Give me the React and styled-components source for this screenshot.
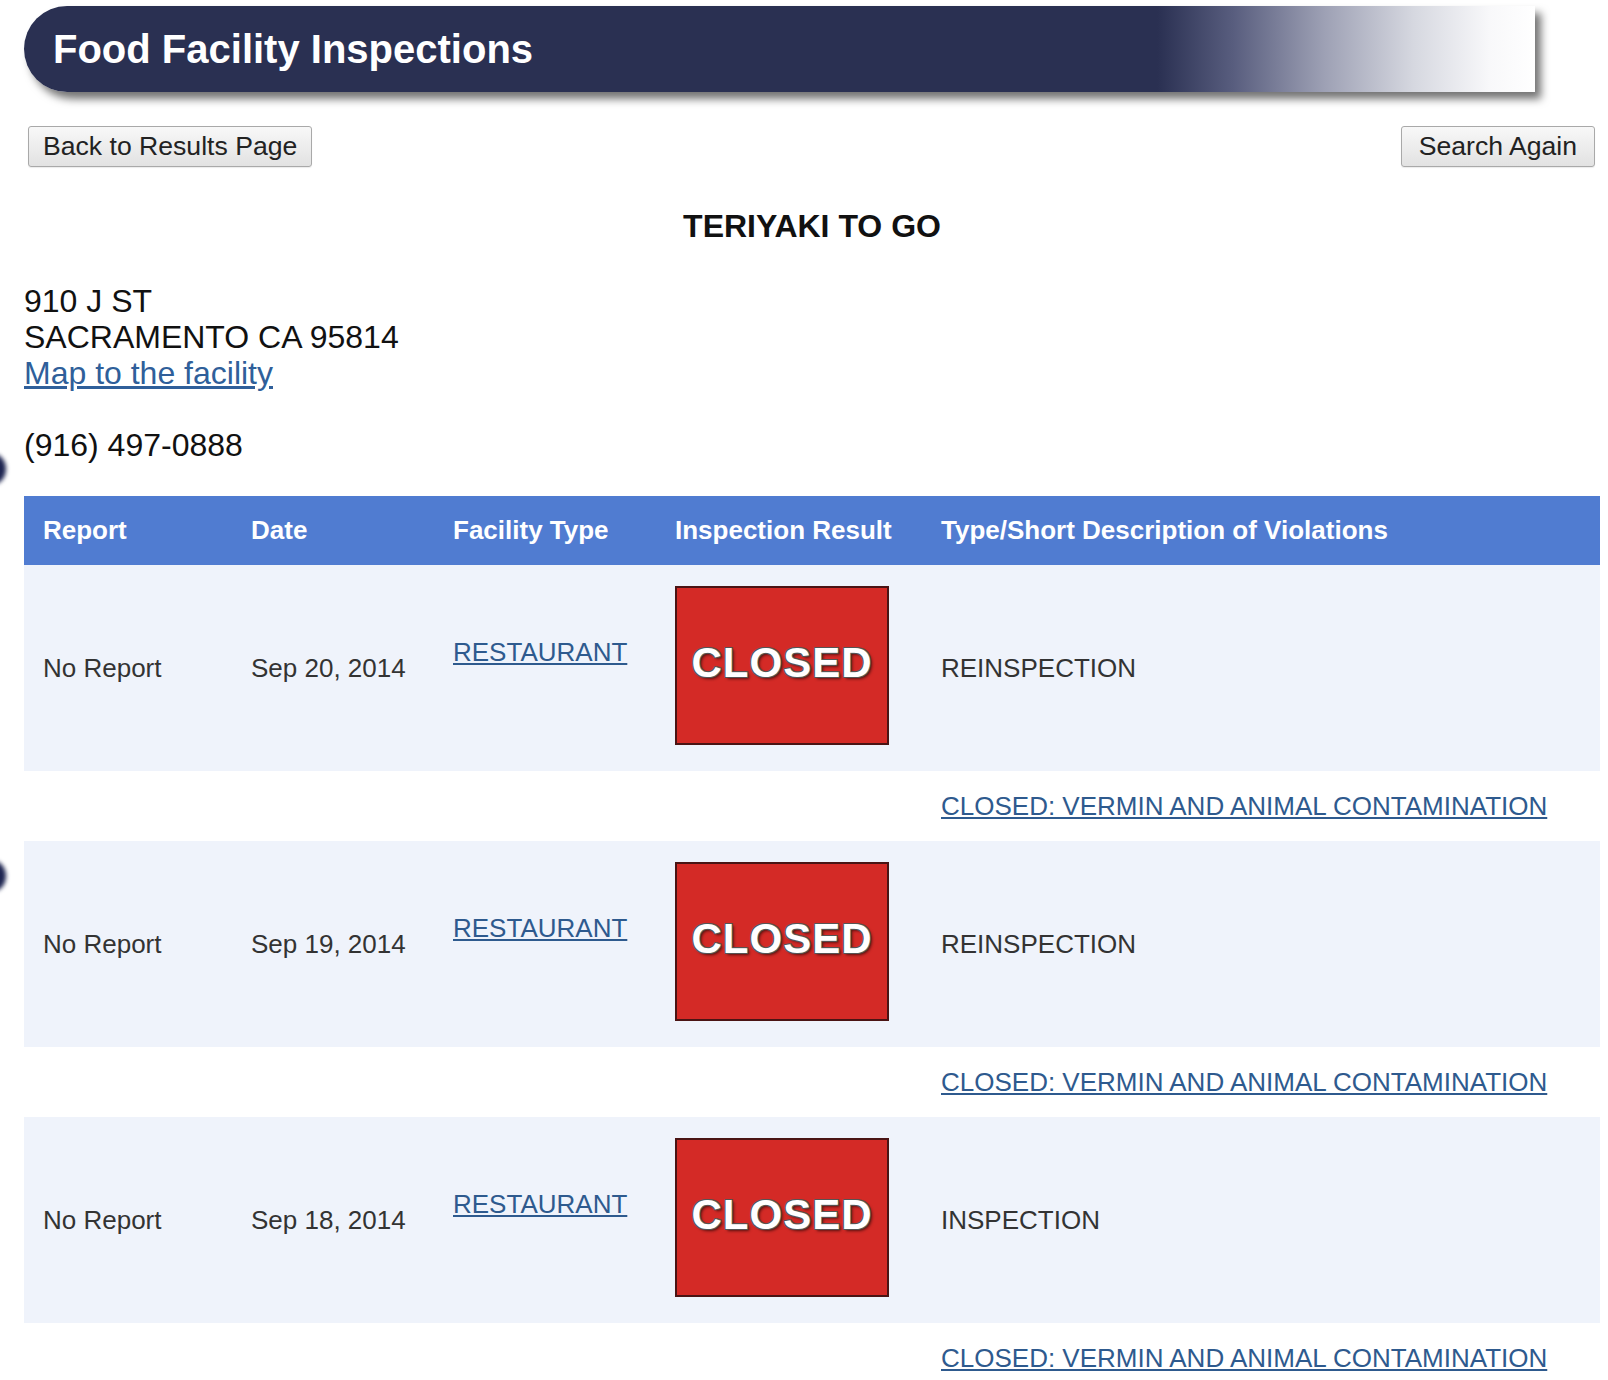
import styled, { createGlobalStyle } from 'styled-components';

const inspections = [
    { report: "No Report", date: "Sep 20, 2014", type: "RESTAURANT", result: "CLOSED", description: "REINSPECTION", violation: "CLOSED: VERMIN AND ANIMAL CONTAMINATION" },
    { report: "No Report", date: "Sep 19, 2014", type: "RESTAURANT", result: "CLOSED", description: "REINSPECTION", violation: "CLOSED: VERMIN AND ANIMAL CONTAMINATION" },
    { report: "No Report", date: "Sep 18, 2014", type: "RESTAURANT", result: "CLOSED", description: "INSPECTION", violation: "CLOSED: VERMIN AND ANIMAL CONTAMINATION" },
];

const columns = ["Report", "Date", "Facility Type", "Inspection Result", "Type/Short Description of Violations"];

function App() {
    return (
        <PageContainer>
            <GlobalStyle />
            <SideDot top={453} />
            <SideDot top={860} />
            <Banner>
                <h1>Food Facility Inspections</h1>
            </Banner>
            <Toolbar>
                <PageButton>Back to Results Page</PageButton>
                <PageButton wide>Search Again</PageButton>
            </Toolbar>
            <FacilityName>TERIYAKI TO GO</FacilityName>
            <Address>
                910 J ST<br />
                SACRAMENTO CA 95814<br />
                <a href="#map">Map to the facility</a><br />
                <br />
                (916) 497-0888
            </Address>
            <ResultsTable>
                <colgroup>
                    <col style={{ width: 208 }} />
                    <col style={{ width: 202 }} />
                    <col style={{ width: 222 }} />
                    <col style={{ width: 266 }} />
                    <col />
                </colgroup>
                <thead>
                    <tr>
                        {columns.map((c) => (
                            <HeadCell key={c}>{c}</HeadCell>
                        ))}
                    </tr>
                </thead>
                <tbody>
                    {inspections.map((item, index) => (
                        <InspectionRows key={index} item={item} />
                    ))}
                </tbody>
            </ResultsTable>
        </PageContainer>
    );
}

function InspectionRows({ item }) {
    return (
        <>
            <MainRow>
                <Cell>{item.report}</Cell>
                <Cell>{item.date}</Cell>
                <Cell raised>
                    <TableLink href="#type">{item.type}</TableLink>
                </Cell>
                <Cell>
                    <ResultBadge>{item.result}</ResultBadge>
                </Cell>
                <Cell>{item.description}</Cell>
            </MainRow>
            <ViolationRow>
                <Cell colSpan={4} />
                <Cell>
                    <TableLink href="#violation">{item.violation}</TableLink>
                </Cell>
            </ViolationRow>
        </>
    );
}

export default App

const GlobalStyle = createGlobalStyle`
    html, body {
        margin: 0;
        padding: 0;
        background: #ffffff;
    }
    body {
        font-family: "Liberation Sans", Arial, sans-serif;
        color: #111;
    }
`

const PageContainer = styled.div`
    position: relative;
    width: 1576px;
    padding: 6px 0 0 24px;
    overflow: hidden;
`

const SideDot = styled.div`
    position: absolute;
    left: -22px;
    top: ${(props) => props.top}px;
    width: 28px;
    height: 32px;
    border-radius: 50%;
    background: #1d2450;
    filter: blur(2px);
`

const Banner = styled.div`
    width: 1511px;
    height: 86px;
    display: flex;
    align-items: center;
    border-radius: 43px 0 0 43px;
    background: linear-gradient(90deg, #2a3052 0%, #2a3052 75%, #585d7e 80%, #9da0b4 86%, #d6d8e0 92%, #f8f8fa 97%, #ffffff 100%);
    box-shadow: 6px 7px 8px rgba(0, 0, 0, 0.55);
    h1 {
        margin: 0;
        padding-left: 29px;
        font-size: 40px;
        font-weight: bold;
        color: #ffffff;
        line-height: 86px;
    }
`

const Toolbar = styled.div`
    display: flex;
    justify-content: space-between;
    align-items: center;
    margin-top: 34px;
    padding: 0 5px 0 4px;
`

const PageButton = styled.button`
    height: 41px;
    padding: 0 ${(props) => (props.wide ? '17px' : '14px')};
    font-family: "Liberation Sans", Arial, sans-serif;
    font-size: 26.6px;
    color: #222;
    border: 1px solid #a9a9a9;
    border-radius: 3px;
    background: linear-gradient(#f8f8f8, #e2e2e2);
    box-shadow: 0 1px 1px rgba(0, 0, 0, 0.08);
`

const FacilityName = styled.h2`
    margin: 41px 0 0;
    text-align: center;
    font-size: 32px;
    font-weight: bold;
    color: #111;
`

const Address = styled.div`
    margin-top: 38px;
    font-size: 32px;
    line-height: 36px;
    color: #111;
    a {
        color: #2f5f9a;
        text-decoration: underline;
    }
`

const ResultsTable = styled.table`
    width: 1576px;
    margin-top: 33px;
    border-collapse: collapse;
    table-layout: fixed;
    font-size: 26px;
`

const HeadCell = styled.th`
    height: 69px;
    padding: 0 0 0 19px;
    text-align: left;
    vertical-align: middle;
    font-weight: bold;
    color: #ffffff;
    background: #507cd1;
    white-space: nowrap;
`

const MainRow = styled.tr`
    height: 206px;
    background: #eff3fb;
`

const ViolationRow = styled.tr`
    height: 70px;
    background: #ffffff;
`

const Cell = styled.td`
    padding: 0 0 ${(props) => (props.raised ? '32px' : '0')} 19px;
    vertical-align: middle;
    color: #333;
    white-space: nowrap;
`

const TableLink = styled.a`
    color: #2e5a8e;
    text-decoration: underline;
`

const ResultBadge = styled.div`
    width: 210px;
    height: 149px;
    margin-bottom: 5px;
    padding-bottom: 6px;
    box-sizing: content-box;
    display: flex;
    align-items: center;
    justify-content: center;
    background: #d42a26;
    border: 2px solid #4a1414;
    font-family: "Liberation Sans", Arial, sans-serif;
    font-size: 42px;
    font-weight: bold;
    letter-spacing: 1px;
    color: #ffffff;
    text-shadow: 1px 1px 0 #555, -1px -1px 0 #555, 1px -1px 0 #555, -1px 1px 0 #555, 2px 2px 3px rgba(0, 0, 0, 0.6);
`
